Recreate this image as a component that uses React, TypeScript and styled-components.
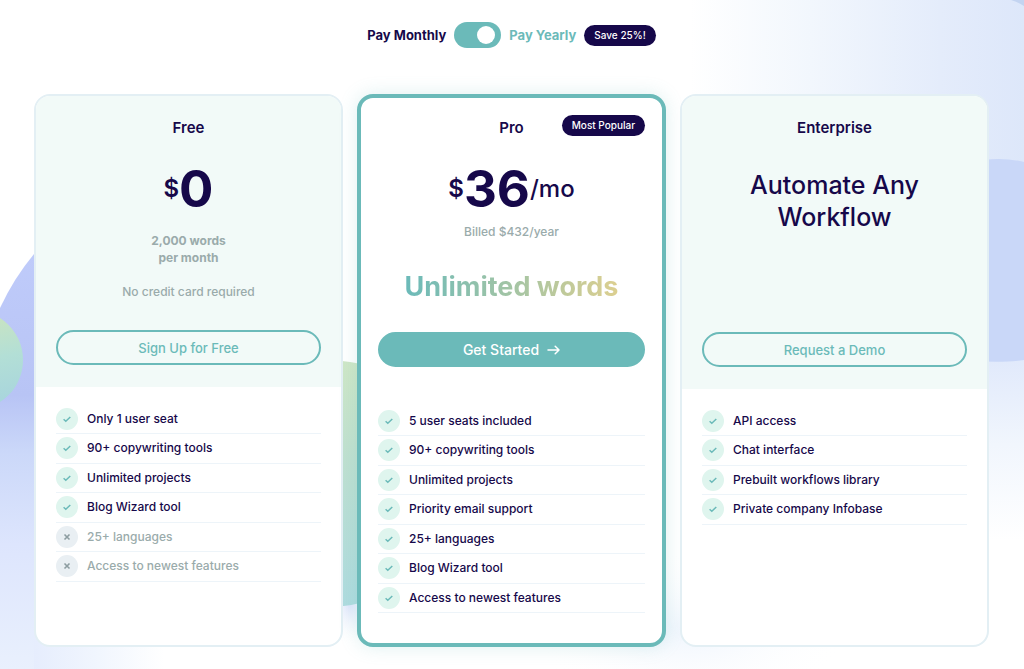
import React from "react";
import styled, { createGlobalStyle } from "styled-components";

const navy = "#16084a";
const teal = "#6bbab9";
const muted = "#9aabab";

const GlobalStyle = createGlobalStyle`
  *, *::before, *::after { box-sizing: border-box; }
  body {
    margin: 0;
    background: #fff;
    color: ${navy};
    font-family: Inter, "Liberation Sans", sans-serif;
    -webkit-font-smoothing: antialiased;
  }
  h2, p, ul { margin: 0; padding: 0; }
`;

const Page = styled.main`
  position: relative;
  min-height: 100vh;
  padding: 22px 35px 22px 34px;
  overflow: hidden;
`;

const Backdrop = styled.svg`
  position: absolute;
  inset: 0;
  width: 100%;
  height: 100%;
  z-index: -1;
`;

const Billing = styled.div`
  display: flex;
  align-items: center;
  justify-content: center;
  gap: 8px;
  margin-bottom: 46px;
  font-size: 13px;
  font-weight: 700;
  line-height: 26px;
`;

const BillingLabel = styled.label<{ $active?: boolean }>`
  color: ${(p) => (p.$active ? teal : navy)};
`;

const Switch = styled.input`
  appearance: none;
  display: flex;
  align-items: center;
  width: 47px;
  height: 26px;
  margin: 0;
  padding: 0 6px;
  border-radius: 13px;
  background: ${teal};
  cursor: pointer;

  &::after {
    content: "";
    width: 18px;
    height: 18px;
    border-radius: 50%;
    background: #fff;
  }
  &:checked { justify-content: flex-end; }
`;

const Badge = styled.span`
  display: inline-block;
  padding: 0 10px;
  border-radius: 11px;
  background: ${navy};
  color: #fff;
  font-size: 10px;
  font-weight: 500;
  line-height: 21px;
  white-space: nowrap;
`;

const Plans = styled.div`
  display: grid;
  grid-template-columns: repeat(3, 1fr);
  gap: 14px;
`;

const Card = styled.section<{ $featured?: boolean }>`
  --gutter: ${(p) => (p.$featured ? "17px" : "20px")};
  position: relative;
  border: ${(p) => (p.$featured ? `4px solid ${teal}` : "2px solid #e3eff4")};
  border-radius: 16px;
  background: #fff;
  box-shadow: ${(p) => (p.$featured ? "0 0 18px rgba(107, 186, 185, 0.22)" : "none")};
`;

const CardHead = styled.header<{ $featured?: boolean; $tall?: boolean }>`
  display: flex;
  flex-direction: column;
  align-items: center;
  min-height: ${(p) => (p.$tall ? "293px" : "291px")};
  padding: ${(p) => (p.$featured ? "20px" : "22px")} var(--gutter) 22px;
  border-radius: 14px 14px 0 0;
  background: ${(p) => (p.$featured ? "transparent" : "#f2faf8")};
  text-align: center;
`;

const CornerBadge = styled(Badge)`
  position: absolute;
  top: 17px;
  right: var(--gutter);
`;

const PlanName = styled.h2`
  font-size: 15px;
  font-weight: 600;
  line-height: 20px;
`;

const Price = styled.p`
  display: flex;
  align-items: center;
  justify-content: center;
  margin-top: 21px;
  line-height: 60px;
`;

const Amount = styled.span`
  font-size: 51px;
  font-weight: 700;
`;

const Unit = styled.span<{ $strong?: boolean }>`
  font-size: 24px;
  font-weight: ${(p) => (p.$strong ? 600 : 500)};
`;

const Quota = styled.p`
  margin-top: 13px;
  color: ${muted};
  font-size: 12px;
  font-weight: 700;
  line-height: 17px;
`;

const Note = styled.p<{ $tight?: boolean }>`
  margin-top: ${(p) => (p.$tight ? "3px" : "16px")};
  color: ${muted};
  font-size: 12px;
  font-weight: 500;
  line-height: 20px;
`;

const Highlight = styled.p`
  margin-top: 27px;
  background: linear-gradient(90deg, ${teal}, #dccf90);
  background-clip: text;
  color: transparent;
  font-size: 27px;
  font-weight: 700;
  line-height: 36px;
`;

const Pitch = styled.p`
  margin-top: 31px;
  font-size: 25px;
  font-weight: 500;
  line-height: 32px;
`;

const Action = styled.button<{ $solid?: boolean }>`
  display: flex;
  align-items: center;
  justify-content: center;
  gap: 8px;
  width: 100%;
  height: 35px;
  margin-top: auto;
  border: 2px solid ${teal};
  border-radius: 18px;
  background: ${(p) => (p.$solid ? teal : "transparent")};
  color: ${(p) => (p.$solid ? "#fff" : teal)};
  font-family: inherit;
  font-size: ${(p) => (p.$solid ? "14px" : "13px")};
  font-weight: 500;
  cursor: pointer;
`;

const Features = styled.ul`
  padding: 18px var(--gutter) 30px;
  list-style: none;
`;

const Feature = styled.li<{ $off?: boolean }>`
  display: flex;
  align-items: center;
  gap: 9px;
  padding: 3px 0;
  border-bottom: 1px solid #edf4f9;
  color: ${(p) => (p.$off ? muted : navy)};
  font-size: 12px;
  font-weight: 500;
  line-height: 22px;

  &:nth-child(even) { padding-bottom: 4px; }
`;

const Mark = styled.svg<{ $off?: boolean }>`
  flex: none;
  width: 22px;
  height: 22px;
  border-radius: 50%;
  background: ${(p) => (p.$off ? "#e9eff3" : "#dff5ee")};
  stroke: ${(p) => (p.$off ? "#8d9da1" : teal)};
  fill: none;
`;

type FeatureItem = { text: string; off?: boolean };

function FeatureList({ items }: { items: FeatureItem[] }) {
  return (
    <Features>
      {items.map((item) => (
        <Feature key={item.text} $off={item.off}>
          <Mark $off={item.off} viewBox="0 0 22 22" aria-hidden="true">
            {item.off ? (
              <path d="M8.5 8.5l5 5M13.5 8.5l-5 5" strokeWidth="1.6" />
            ) : (
              <path d="M7.6 11.2l2.2 2 4.5-4.2" strokeWidth="1.5" />
            )}
          </Mark>
          {item.text}
        </Feature>
      ))}
    </Features>
  );
}

const freeFeatures: FeatureItem[] = [
  { text: "Only 1 user seat" },
  { text: "90+ copywriting tools" },
  { text: "Unlimited projects" },
  { text: "Blog Wizard tool" },
  { text: "25+ languages", off: true },
  { text: "Access to newest features", off: true },
];

const proFeatures: FeatureItem[] = [
  { text: "5 user seats included" },
  { text: "90+ copywriting tools" },
  { text: "Unlimited projects" },
  { text: "Priority email support" },
  { text: "25+ languages" },
  { text: "Blog Wizard tool" },
  { text: "Access to newest features" },
];

const enterpriseFeatures: FeatureItem[] = [
  { text: "API access" },
  { text: "Chat interface" },
  { text: "Prebuilt workflows library" },
  { text: "Private company Infobase" },
];

function Blobs() {
  return (
    <Backdrop viewBox="0 0 1024 669" preserveAspectRatio="none" aria-hidden="true">
      <defs>
        <linearGradient id="leftBlue" x1="0" y1="0" x2="0" y2="1">
          <stop offset="0" stopColor="#bfcbfa" />
          <stop offset="0.34" stopColor="#b8c4f5" />
          <stop offset="0.48" stopColor="#cbd8f9" />
          <stop offset="0.7" stopColor="#dde5fd" />
          <stop offset="1" stopColor="#e9f0fd" />
        </linearGradient>
        <linearGradient id="ball" x1="0" y1="0" x2="0.2" y2="1">
          <stop offset="0" stopColor="#d3e6b8" />
          <stop offset="0.6" stopColor="#b3dfd6" />
          <stop offset="1" stopColor="#a9d6dc" />
        </linearGradient>
        <linearGradient id="green" x1="0" y1="0" x2="0" y2="1">
          <stop offset="0" stopColor="#cfe7c6" />
          <stop offset="0.4" stopColor="#bfe0d0" />
          <stop offset="1" stopColor="#aedbdf" />
        </linearGradient>
        <linearGradient id="rightGlow" gradientUnits="userSpaceOnUse" x1="690" y1="0" x2="1024" y2="0">
          <stop offset="0" stopColor="#ffffff" />
          <stop offset="0.36" stopColor="#f2f7fd" />
          <stop offset="0.75" stopColor="#e4ecfb" />
          <stop offset="1" stopColor="#dde7fa" />
        </linearGradient>
        <linearGradient id="rightFade" x1="0" y1="0" x2="0" y2="1">
          <stop offset="0" stopColor="#dfe8fb" />
          <stop offset="0.5" stopColor="#f1f6fd" />
          <stop offset="1" stopColor="#ffffff" />
        </linearGradient>
        <radialGradient id="lowGlow">
          <stop offset="0" stopColor="#dfe6fb" />
          <stop offset="1" stopColor="#ffffff" stopOpacity="0" />
        </radialGradient>
        <radialGradient id="paleGlow">
          <stop offset="0" stopColor="#eff5fd" />
          <stop offset="1" stopColor="#ffffff" stopOpacity="0" />
        </radialGradient>
        <linearGradient id="leftFade" x1="0" y1="0" x2="1" y2="0">
          <stop offset="0" stopColor="#e6edfd" />
          <stop offset="0.5" stopColor="#f1f6fe" />
          <stop offset="1" stopColor="#ffffff" />
        </linearGradient>
      </defs>
      <rect x="690" width="334" height="350" fill="url(#rightGlow)" />
      <rect x="970" y="350" width="54" height="190" fill="url(#rightFade)" />
      <path d="M1011 0Q1018 2 1024 6V0Z" fill="#c3d4f1" />
      <path d="M970 361V162Q1000 156 1024 162V360Q1006 363 970 361Z" fill="#c9d7f8" />
      <path d="M34 254Q14 278 0 308V669H34V254Z" fill="url(#leftBlue)" />
      <rect x="34" y="600" width="130" height="69" fill="url(#leftFade)" />
      <circle cx="-27" cy="360" r="50" fill="url(#ball)" />
      <ellipse cx="350" cy="605" rx="30" ry="40" fill="url(#lowGlow)" />
      <ellipse cx="690" cy="630" rx="160" ry="80" fill="url(#paleGlow)" />
      <path d="M330 360Q350 361 370 366V600Q350 607 330 607Z" fill="url(#green)" />
    </Backdrop>
  );
}

export default function App() {
  return (
    <>
      <GlobalStyle />
      <Page>
        <Blobs />
        <Billing>
          <BillingLabel htmlFor="yearly">Pay Monthly</BillingLabel>
          <Switch id="yearly" type="checkbox" role="switch" defaultChecked />
          <BillingLabel htmlFor="yearly" $active>
            Pay Yearly
          </BillingLabel>
          <Badge>Save 25%!</Badge>
        </Billing>

        <Plans>
          <Card>
            <CardHead>
              <PlanName>Free</PlanName>
              <Price>
                <Unit $strong>$</Unit>
                <Amount>0</Amount>
              </Price>
              <Quota>
                2,000 words
                <br />
                per month
              </Quota>
              <Note>No credit card required</Note>
              <Action type="button">Sign Up for Free</Action>
            </CardHead>
            <FeatureList items={freeFeatures} />
          </Card>

          <Card $featured>
            <CardHead $featured>
              <PlanName>Pro</PlanName>
              <CornerBadge>Most Popular</CornerBadge>
              <Price>
                <Unit $strong>$</Unit>
                <Amount>36</Amount>
                <Unit>/mo</Unit>
              </Price>
              <Note $tight>Billed $432/year</Note>
              <Highlight>Unlimited words</Highlight>
              <Action type="button" $solid>
                Get Started
                <svg width="13" height="12" viewBox="0 0 13 12" fill="none" stroke="currentColor" strokeWidth="1.5" strokeLinecap="round" strokeLinejoin="round" aria-hidden="true">
                  <path d="M1 6h11M8.2 2.2L12 6 8.2 9.8" />
                </svg>
              </Action>
            </CardHead>
            <FeatureList items={proFeatures} />
          </Card>

          <Card>
            <CardHead $tall>
              <PlanName>Enterprise</PlanName>
              <Pitch>
                Automate Any
                <br />
                Workflow
              </Pitch>
              <Action type="button">Request a Demo</Action>
            </CardHead>
            <FeatureList items={enterpriseFeatures} />
          </Card>
        </Plans>
      </Page>
    </>
  );
}
